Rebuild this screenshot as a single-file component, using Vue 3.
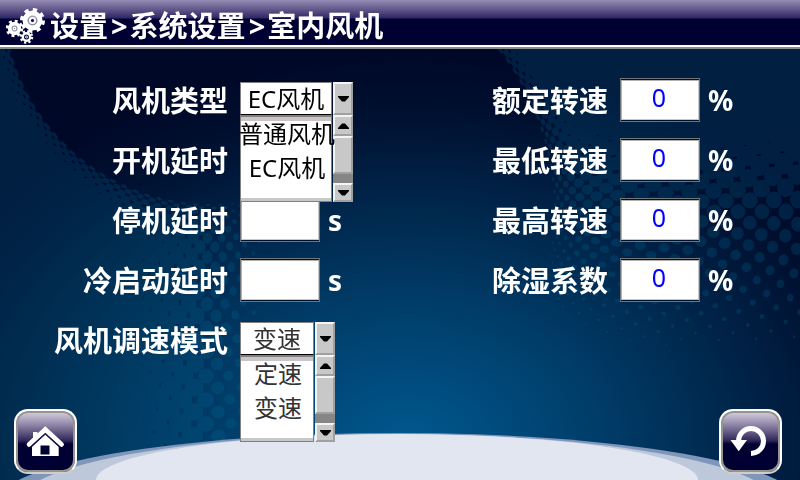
<script setup>
import { ref } from 'vue'

const percentFields = ref([
  { id: 'rated', label: '额定转速', value: '0' },
  { id: 'lowest', label: '最低转速', value: '0' },
  { id: 'highest', label: '最高转速', value: '0' },
  { id: 'dehumid', label: '除湿系数', value: '0' },
])

const leftRows = ref([
  { id: 'fanType', label: '风机类型', kind: 'list', value: 'EC风机', options: ['普通风机', 'EC风机'] },
  { id: 'startDelay', label: '开机延时', kind: 'text', value: '', unit: '' },
  { id: 'stopDelay', label: '停机延时', kind: 'text', value: '', unit: 's' },
  { id: 'coldDelay', label: '冷启动延时', kind: 'text', value: '', unit: 's' },
  { id: 'speedMode', label: '风机调速模式', kind: 'list', narrow: true, value: '变速', options: ['定速', '变速'] },
])

const clamp = (v, lo, hi) => Math.min(hi, Math.max(lo, v))

// Halftone dots sit on rings around a centre; rings spread out as they grow.
function halftone(cx, cy, radius, from, to, step, scaleAt) {
  const dots = []
  let r = radius
  let gap = 3
  let ring = 0
  while (r < 640) {
    const shift = ring % 2 ? step / 2 : 0
    for (let a = from + shift; a < to; a += step) {
      const rad = (a * Math.PI) / 180
      const x = cx + r * Math.cos(rad)
      const y = cy + r * Math.sin(rad)
      if (x < -15 || x > 815 || y < 35 || y > 490) continue
      const k = scaleAt(x, y) * Math.min(1, 0.55 + (r - radius) / 60)
      if (k < 0.08) continue
      const tangent = (r * step * Math.PI) / 180
      dots.push({ x, y, a, rx: gap * k, ry: (tangent / 2) * k * 1.1 })
    }
    r += gap
    gap = Math.min(gap + 1, 12)
    ring += 1
  }
  return dots
}

const leftDots = halftone(210, -3, 208, 60, 190, 3.4, (x) =>
  clamp(1.18 - Math.max(0, x - 20) / 420 - Math.max(0, x - 190) / 150, 0, 1.13))
const rightDots = halftone(293, 210, 262, -60, 35, 2.8, (x, y) =>
  clamp(1.26 - (y - 50) / 250 - Math.max(0, 640 - x) / 800, 0, 1.13))
</script>

<template>
  <div class="page">
    <svg class="backdrop" viewBox="0 0 800 480" preserveAspectRatio="xMidYMax slice" aria-hidden="true">
      <g class="dots">
        <ellipse v-for="(d, i) in leftDots" :key="'l' + i" :rx="d.rx" :ry="d.ry"
          :transform="`translate(${d.x} ${d.y}) rotate(${d.a})`" />
        <ellipse v-for="(d, i) in rightDots" :key="'r' + i" :rx="d.rx" :ry="d.ry"
          :transform="`translate(${d.x} ${d.y}) rotate(${d.a})`" />
      </g>
      <ellipse cx="398" cy="502" rx="400" ry="69" fill="#7f95b9" />
      <ellipse cx="397" cy="504" rx="380" ry="70" fill="#bdc8db" />
      <ellipse cx="397" cy="480" rx="301" ry="46" fill="#e1e6f0" />
    </svg>

    <header class="titlebar">
      <svg class="gears" viewBox="0 0 44 40" aria-hidden="true">
        <g fill="#fff" fill-opacity="0.55">
          <circle cx="26.500" cy="15.500" r="6" />
          <circle cx="8.500" cy="23.500" r="4" />
        </g>
        <circle cx="26.500" cy="15.500" r="1.600" fill="#1c1548" />
        <g fill="none" stroke="#fff">
          <circle cx="26.500" cy="15.500" r="10.500" stroke-width="4" stroke-dasharray="4.100 4.147" />
          <circle cx="26.500" cy="15.500" r="7.500" stroke-width="5" />
          <circle cx="26.500" cy="15.500" r="2.700" stroke-width="1.800" />
          <circle cx="8.500" cy="23.500" r="7.300" stroke-width="3" stroke-dasharray="2.850 2.883" />
          <circle cx="8.500" cy="23.500" r="4.800" stroke-width="3.800" />
          <circle cx="8.500" cy="23.500" r="1.300" stroke-width="1.200" />
          <circle cx="20.500" cy="32" r="5.600" stroke-width="2.400" stroke-dasharray="2.200 2.198" />
          <circle cx="20.500" cy="32" r="3.700" stroke-width="2.400" />
          <circle cx="20.500" cy="32" r="1" stroke-width="1" />
        </g>
      </svg>
      <h1>设置<span class="sep">&gt;</span>系统设置<span class="sep">&gt;</span>室内风机</h1>
    </header>

    <main class="content">
      <section class="column left">
        <div v-for="row in leftRows" :key="row.id" class="row">
          <label :for="row.id">{{ row.label }}</label>
          <div v-if="row.kind === 'list'" class="dropdown" :class="{ narrow: row.narrow }">
            <div class="current">
              <select :id="row.id" v-model="row.value">
                <option v-for="o in row.options" :key="o">{{ o }}</option>
              </select>
              <button type="button" class="key" aria-label="展开">
                <svg viewBox="0 0 11 6"><path d="M0 0h11v1L7 5.500H4L0 1z" /></svg>
              </button>
            </div>
            <div class="menu">
              <div class="options" role="listbox" :aria-label="row.label">
                <button v-for="o in row.options" :key="o" type="button" role="option"
                  :aria-selected="o === row.value" @click="row.value = o">{{ o }}</button>
              </div>
              <div class="scroll">
                <button type="button" class="key" aria-label="向上">
                  <svg viewBox="0 0 11 6"><path d="M0 6h11V5L7 .500H4L0 5z" /></svg>
                </button>
                <div class="thumb"></div>
                <div class="track"></div>
                <button type="button" class="key" aria-label="向下">
                  <svg viewBox="0 0 11 6"><path d="M0 0h11v1L7 5.500H4L0 1z" /></svg>
                </button>
              </div>
            </div>
          </div>
          <template v-else>
            <input :id="row.id" v-model="row.value" type="text">
            <span v-if="row.unit" class="unit">{{ row.unit }}</span>
          </template>
        </div>
      </section>

      <section class="column right">
        <div v-for="f in percentFields" :key="f.id" class="row">
          <label :for="f.id">{{ f.label }}</label>
          <input :id="f.id" v-model="f.value" type="text">
          <span class="unit">%</span>
        </div>
      </section>
    </main>

    <footer class="actions">
      <button type="button" class="tile" aria-label="主页">
        <svg viewBox="0 0 63 65">
          <path d="M19 23h4.500v8H19z" fill="#fff" />
          <path d="M15 35.500L31.300 20.500L47.600 35.500" fill="none" stroke="#fff" stroke-width="4.600" stroke-linecap="round" />
          <path d="M31.300 25.500L44.700 37.800V47H18V37.800z" fill="#fff" />
          <path d="M16.500 38.300L31.300 24.800L46.100 38.300" fill="none" stroke="#1a1446" stroke-width="1.200" />
          <path d="M26.500 36.500h9v9h-9z" fill="#000033" />
        </svg>
      </button>
      <button type="button" class="tile" aria-label="返回">
        <svg viewBox="0 0 63 65">
          <path d="M32 44.500A12.500 12.500 0 1 0 19.500 32" fill="none" stroke="#fff" stroke-width="5" />
          <path d="M11.500 31H28L19.700 42.300z" fill="#fff" />
        </svg>
      </button>
    </footer>
  </div>
</template>

<style>
body {
  margin: 0;
}
</style>

<style scoped>
.page {
  position: relative;
  isolation: isolate;
  display: flex;
  flex-direction: column;
  box-sizing: border-box;
  min-height: 100vh;
  overflow: hidden;
  color: #fff;
  font-family: "Noto Sans", "Noto Sans CJK SC", sans-serif;
  background: radial-gradient(ellipse 530px 385px at 51% 92%, #00588f 0%, #003d69 36%, #00264b 62%, #001030 86%, #000828 100%);
}

.backdrop {
  position: absolute;
  inset: 0;
  z-index: -1;
  width: 100%;
  height: 100%;
}

.dots {
  fill: #00709c;
  opacity: 0.23;
}

.titlebar {
  display: flex;
  align-items: center;
  box-sizing: border-box;
  height: 49px;
  padding: 2px 6px 0;
  background: linear-gradient(#958bb4 0, #5f5488 10px, #2f2765 18px, #000033 19px, #000033 100%);
  border-bottom: 2px solid #8c8c8c;
  box-shadow: inset 0 -2px #fff;
}

.gears {
  width: 44px;
  height: 40px;
}

h1 {
  margin: 0;
  padding-top: 2px;
  font-size: 29px;
  line-height: 40px;
  font-weight: 700;
  white-space: nowrap;
}

.sep {
  padding: 0 2px 0 3px;
}

.content {
  display: grid;
  grid-template-columns: 1fr 1fr;
  padding-top: 29px;
}

.column {
  display: flex;
  flex-direction: column;
  gap: 16px;
}

.row {
  display: grid;
  grid-template-columns: 57% auto 1fr;
  align-items: center;
  height: 44px;
}

.right .row {
  grid-template-columns: 52% auto 1fr;
}

label,
.unit {
  font-size: 29px;
  line-height: 42px;
  font-weight: 700;
  white-space: nowrap;
}

label {
  padding-top: 2px;
  text-align: right;
}

.unit {
  padding-left: 8px;
  font-size: 28px;
}

input {
  box-sizing: border-box;
  width: 80px;
  height: 44px;
  margin: 0 0 0 12px;
  padding: 0 2px 6px 0;
  border: 1px solid #707478;
  border-radius: 0;
  outline: none;
  background: #fff;
  box-shadow: inset 0 1px #001028, inset 0 -1px #001028, inset 1px 2px #b0b0b0, inset -1px -2px #c8c8c8;
  color: #0000ff;
  font: 400 25px "Noto Sans", "Noto Sans CJK SC", sans-serif;
  text-align: center;
}

.dropdown {
  position: relative;
  width: 113px;
  height: 36px;
  margin-left: 12px;
}

.dropdown.narrow {
  width: 95px;
}

.current,
.menu {
  display: grid;
  grid-template-columns: 1fr 20px;
  column-gap: 1px;
}

.current {
  height: 33px;
}

select,
.options button {
  font: 400 24px/32px "Noto Sans", "Noto Sans CJK SC", sans-serif;
  color: #000;
}

.narrow select,
.narrow .options button {
  color: #333;
}

select {
  appearance: none;
  box-sizing: border-box;
  min-width: 0;
  height: 33px;
  margin: 0;
  padding: 0;
  border: 1px solid #808080;
  border-bottom-color: #000;
  border-radius: 0;
  outline: none;
  background: #fff;
  text-align: center;
  text-align-last: center;
}

.menu {
  position: absolute;
  z-index: 2;
  top: 33px;
  left: 0;
  right: 0;
  height: 87px;
}

.options {
  position: relative;
  z-index: 1;
  display: flex;
  flex-direction: column;
  min-width: 0;
  box-sizing: border-box;
  border: 1px solid #808080;
  border-top-width: 2px;
  background: #fff;
  box-shadow: inset 0 4px #c8c4c8, inset 0 -3px #c8c8c8;
}

.options button {
  display: flex;
  justify-content: center;
  height: 34px;
  padding: 0 0 0 2px;
  border: 0;
  background: none;
  line-height: 34px;
  white-space: nowrap;
}

.scroll {
  display: grid;
  grid-template-rows: 21px 1fr 9px 19px;
}

.key,
.thumb {
  background: #c8c8c8;
  border: 2px solid;
  border-color: #f4f4f4 #a0a0a0 #a0a0a0 #f4f4f4;
}

.key {
  display: flex;
  align-items: center;
  justify-content: center;
  box-sizing: border-box;
  margin: 0;
  padding: 0;
  border-radius: 0;
}

.key svg {
  width: 11px;
  height: 6px;
  fill: #000;
}

.track {
  background: #868686;
}

.actions {
  display: flex;
  justify-content: space-between;
  margin-top: auto;
  padding: 0 18px 6px 14px;
}

.tile {
  box-sizing: border-box;
  width: 63px;
  height: 65px;
  padding: 0;
  border: 2px solid #fff;
  border-bottom-color: #d0ceca;
  border-radius: 14px;
  background: linear-gradient(#e4e0ea 0, #a49cb8 12px, #5f5580 24px, #2c2358 32px, #000033 35px, #000033 100%) border-box;
  box-shadow: inset 0 0 0 2px #96948f;
}

.tile svg {
  display: block;
  width: 63px;
  height: 65px;
  margin: -2px;
}
</style>
